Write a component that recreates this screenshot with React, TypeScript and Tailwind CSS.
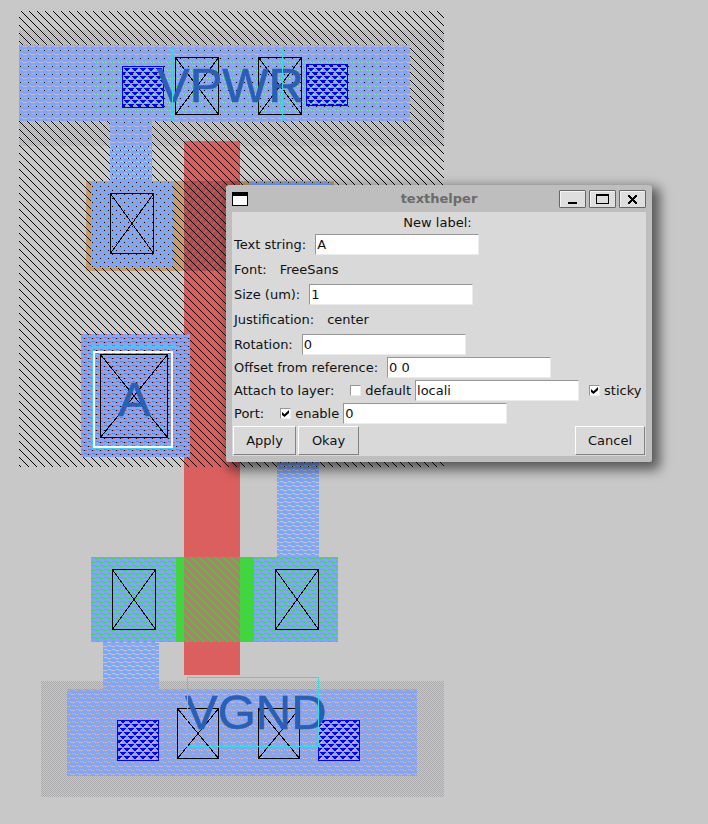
import type { ReactNode } from "react";

/* ---------- layout canvas ---------- */

type PatternProps = { id: string; rows: string[]; colors: Record<string, string> };

// A stipple tile: every character is one pixel, "." leaves the pixel clear.
function Stipple({ id, rows, colors }: PatternProps) {
  return (
    <pattern id={id} width={rows[0].length} height={rows.length} patternUnits="userSpaceOnUse">
      {rows.flatMap((row, y) =>
        row.split("").map((c, x) =>
          c === "." ? null : <rect key={`${x}-${y}`} x={x} y={y} width={1} height={1} fill={colors[c]} />,
        ),
      )}
    </pattern>
  );
}

const diagonalDown = (offset: number) =>
  Array.from({ length: 8 }, (_, y) =>
    Array.from({ length: 8 }, (_, x) => ((x - y - offset + 16) % 8 === 0 ? "k" : ".")).join(""),
  );

const diagonalUp = Array.from({ length: 8 }, (_, y) =>
  Array.from({ length: 8 }, (_, x) => ((x + y) % 8 === 4 ? "k" : ".")).join(""),
);

const metalRows = [
  "bbbbbbbb",
  "...bbbbb",
  "bbb....b",
  "bbbbbbbb",
  "bbbbbbbb",
  "bbbb...b",
  "...bbbb.",
  "bbbbbbbb",
];

const railRows = [
  "bbbbbbbb",
  "p.pbbbbb",
  "bbbp.p.b",
  "bbbbbbbb",
  "bbbbbbbb",
  "bbbbp.pb",
  "p.pbbbb.",
  "bbbbbbbb",
];

const tapRows = [
  "........",
  "........",
  "...t.t..",
  "........",
  "........",
  "........",
  "t.......",
  "........",
];

const contactRows = [
  "kkkkkk..",
  ".kkkk...",
  "..kk....",
  "........",
  "kk..kkkk",
  "k....kkk",
  "......kk",
  "........",
];

type Box = { x: number; y: number; w: number; h: number };

function Fill({ x, y, w, h, fill }: Box & { fill: string }) {
  return <rect x={x} y={y} width={w} height={h} fill={fill} />;
}

function Outline({ x, y, w, h, color }: Box & { color: string }) {
  return <path d={`M${x + 0.5} ${y + 0.5}h${w - 1}v${h - 1}h${1 - w}z`} fill="none" stroke={color} />;
}

function Cut({ x, y, w, h }: Box) {
  return (
    <g>
      <Outline x={x} y={y} w={w} h={h} color="#000" />
      <path d={`M${x} ${y}l${w} ${h}M${x + w} ${y}l${-w} ${h}`} stroke="#000" fill="none" />
    </g>
  );
}

function Via({ x, y, w, h }: Box) {
  return (
    <g>
      <Fill x={x} y={y} w={w} h={h} fill="url(#via)" />
      <Outline x={x} y={y} w={w} h={h} color="#0000ff" />
    </g>
  );
}

function CellLayout() {
  return (
    <svg width="708" height="824" viewBox="0 0 708 824" shapeRendering="crispEdges" className="block" role="img" aria-label="Cell layout">
      <defs>
        <Stipple id="well" rows={diagonalDown(2)} colors={{ k: "#000" }} />
        <Stipple id="ngate" rows={diagonalDown(2)} colors={{ k: "#41d641" }} />
        <Stipple id="pgate" rows={diagonalUp} colors={{ k: "#b8705c" }} />
        <Stipple id="implant" rows={["i.", ".i"]} colors={{ i: "#aaa9ab" }} />
        <Stipple id="metal" rows={metalRows} colors={{ b: "#7ea6fb" }} />
        <Stipple id="rail" rows={railRows} colors={{ b: "#84a4f6", p: "#c4b4c4" }} />
        <Stipple id="ntap" rows={tapRows} colors={{ t: "#41d641" }} />
        <Stipple id="ptap" rows={tapRows} colors={{ t: "#d29a80" }} />
        <Stipple id="via" rows={contactRows} colors={{ k: "#0000ff" }} />
      </defs>

      {/* poly and diffusion */}
      <Fill x={86} y={181} w={248} h={90} fill="#c69c6d" />
      <Fill x={184} y={141} w={56} h={534} fill="#dc5f5f" />
      <Fill x={184} y={181} w={56} h={90} fill="#b84856" />
      <Fill x={184} y={181} w={56} h={90} fill="url(#pgate)" />
      <Fill x={81} y={334} w={109} h={123} fill="#dc5f5f" />
      <Fill x={91} y={557} w={247} h={85} fill="#41d641" />
      <Fill x={184} y={557} w={56} h={85} fill="#aa8468" />
      <Fill x={184} y={557} w={56} h={85} fill="url(#ngate)" />

      {/* implants and well */}
      <Fill x={19} y={30} w={425} h={111} fill="url(#implant)" />
      <Fill x={19} y={141} w={165} h={5} fill="url(#implant)" />
      <Fill x={240} y={141} w={204} h={5} fill="url(#implant)" />
      <Fill x={41} y={681} w={403} h={116} fill="url(#implant)" />
      <Fill x={19} y={11} w={425} h={456} fill="url(#well)" />

      {/* local interconnect */}
      <Fill x={19} y={45} w={391} h={76} fill="url(#rail)" />
      <Fill x={110} y={121} w={42} h={25} fill="url(#rail)" />
      <Fill x={110} y={146} w={42} h={35} fill="url(#metal)" />
      <Fill x={91} y={181} w={82} h={87} fill="url(#metal)" />
      <Fill x={249} y={181} w={82} h={87} fill="url(#metal)" />
      <Fill x={81} y={334} w={109} h={123} fill="url(#metal)" />
      <Fill x={277} y={268} w={42} h={289} fill="url(#metal)" />
      <Fill x={91} y={557} w={85} h={85} fill="url(#metal)" />
      <Fill x={254} y={557} w={84} h={85} fill="url(#metal)" />
      <Fill x={103} y={642} w={56} h={39} fill="url(#metal)" />
      <Fill x={103} y={681} w={56} h={8} fill="url(#rail)" />
      <Fill x={67} y={689} w={350} h={87} fill="url(#rail)" />
      <Fill x={95} y={55} w={286} h={58} fill="url(#ntap)" />
      <Fill x={96} y={705} w={284} h={57} fill="url(#ptap)" />

      {/* contacts */}
      <Via x={122} y={66} w={42} h={42} />
      <Via x={306} y={64} w={42} h={42} />
      <Via x={117} y={720} w={42} h={41} />
      <Via x={318} y={720} w={42} h={41} />
      <Cut x={175} y={57} w={44} h={58} />
      <Cut x={258} y={57} w={44} h={58} />
      <Cut x={110} y={193} w={44} h={61} />
      <Cut x={100} y={354} w={68} h={84} />
      <Cut x={112} y={569} w={44} h={61} />
      <Cut x={275} y={569} w={44} h={61} />
      <Cut x={177} y={708} w={42} h={51} />
      <Cut x={258} y={708} w={42} h={51} />

      {/* labels and the cursor box */}
      <g fill="#2b5fb5" stroke="#2b5fb5" strokeWidth="0.6" fontFamily="'Liberation Sans', Arial, sans-serif" fontSize="49">
        <text x="157" y="102">VPWR</text>
        <text x="185" y="729">VGND</text>
        <text x="118" y="416">A</text>
      </g>
      <Outline x={172} y={47} w={111} h={75} color="#33dddd" />
      <Outline x={187} y={677} w={132} h={70} color="#33dddd" />
      <Outline x={92} y={346} w={84} h={103} color="#4cc8e8" />
      <rect x="94" y="352" width="78" height="95" fill="none" stroke="#fff" strokeWidth="2" />
    </svg>
  );
}

/* ---------- dialog ---------- */

function WindowButton({ label, children }: { label: string; children: ReactNode }) {
  return (
    <button type="button" aria-label={label} className="flex h-[18px] w-[27px] items-center justify-center rounded-[1px] border border-[#666] bg-[#dedede] shadow-[inset_1px_1px_0_#f4f4f4]">
      <svg width="15" height="12" viewBox="0 0 15 12" shapeRendering="crispEdges" aria-hidden="true">{children}</svg>
    </button>
  );
}

function Entry({ id, value }: { id: string; value: string }) {
  return (
    <input
      id={id}
      defaultValue={value}
      className="h-[21px] w-[164px] border border-t-[#969696] border-r-[#ececec] border-b-[#ececec] border-l-[#969696] bg-white px-px outline-none"
    />
  );
}

function Field({ id, label, value }: { id: string; label: string; value: string }) {
  return (
    <div className="flex h-[23px] items-center gap-[9px]">
      <label htmlFor={id}>{label}</label>
      <Entry id={id} value={value} />
    </div>
  );
}

function Check({ label, checked = false }: { label: string; checked?: boolean }) {
  return (
    <label className="flex items-center gap-1">
      <span className="grid">
        <input
          type="checkbox"
          defaultChecked={checked}
          className="peer col-start-1 row-start-1 size-[11px] appearance-none border border-t-[#969696] border-r-[#ececec] border-b-[#ececec] border-l-[#969696] bg-white"
        />
        <svg viewBox="0 0 11 11" className="pointer-events-none invisible col-start-1 row-start-1 size-[11px] peer-checked:visible" aria-hidden="true">
          <path d="M2 4l2.5 2.2L9 2v3L4.500 9L2 7z" fill="#000" />
        </svg>
      </span>
      {label}
    </label>
  );
}

function PushButton({ children, width }: { children: string; width: string }) {
  return (
    <button type="button" className={`h-[29px] border border-t-white border-r-[#828282] border-b-[#828282] border-l-white bg-[#d9d9d9] ${width}`}>
      {children}
    </button>
  );
}

function TextHelper() {
  return (
    <section
      aria-label="texthelper"
      className="absolute top-[185px] left-[226px] w-[426px] rounded-t-[3px] rounded-b-[2px] bg-[#bebebe] px-1.5 pb-1.5 text-[13px] leading-4 text-[#111] shadow-[5px_5px_12px_3px_rgba(0,0,0,0.55)]"
    >
      <header className="grid h-[27px] grid-cols-[1fr_auto_1fr] items-center">
        <svg width="16" height="14" viewBox="0 0 16 14" shapeRendering="crispEdges" aria-hidden="true">
          <path d="M0 0h16v14H0z" fill="#000" />
          <path d="M1 4h14v9H1z" fill="#fff" />
        </svg>
        <h1 className="font-bold text-[#6b6b6b]">texthelper</h1>
        <div className="flex justify-end gap-[3px]">
          <WindowButton label="Minimize">
            <path d="M3 9h9v2H3z" fill="#000" />
          </WindowButton>
          <WindowButton label="Maximize">
            <path d="M1 1h13v10H1zM2 3v7h11V3z" fill="#000" fillRule="evenodd" />
          </WindowButton>
          <WindowButton label="Close">
            <path d="M3 2h2v1h1v1h1v1h1V4h1V3h1V2h2v2h-1v1h-1v1H9v1h1v1h1v1h1v2h-2v-1H9V9H8V8H7v1H6v1H5v1H3V9h1V8h1V7h1V6H5V5H4V4H3z" fill="#000" />
          </WindowButton>
        </div>
      </header>
      <form className="bg-[#d9d9d9] px-px pb-px" onSubmit={(e) => e.preventDefault()}>
        <div className="flex flex-col pl-px">
          <h2 className="flex h-[21px] items-center justify-center pr-1">New label:</h2>
          <Field id="text-string" label="Text string:" value="A" />
          <p className="flex h-[27px] items-center gap-[13px]"><span>Font:</span><span>FreeSans</span></p>
          <Field id="size" label="Size (um):" value="1" />
          <p className="flex h-[27px] items-center gap-[13px]"><span>Justification:</span><span>center</span></p>
          <Field id="rotation" label="Rotation:" value="0" />
          <Field id="offset" label="Offset from reference:" value="0 0" />
          <div className="flex h-[23px] items-center">
            <label htmlFor="layer" className="mr-4">Attach to layer:</label>
            <Check label="default" />
            <div className="mr-2.5 ml-1 flex"><Entry id="layer" value="locali" /></div>
            <Check label="sticky" checked />
          </div>
          <div className="flex h-[23px] items-center">
            <label htmlFor="port" className="mr-4">Port:</label>
            <Check label="enable" checked />
            <div className="ml-1 flex"><Entry id="port" value="0" /></div>
          </div>
        </div>
        <div className="mt-px flex gap-0.5">
          <PushButton width="w-[63px]">Apply</PushButton>
          <PushButton width="w-[61px]">Okay</PushButton>
          <PushButton width="ml-auto w-[70px]">Cancel</PushButton>
        </div>
      </form>
    </section>
  );
}

export default function App() {
  return (
    <main className="relative min-h-screen overflow-hidden bg-[#c8c8c8] font-['DejaVu_Sans',sans-serif]">
      <CellLayout />
      <TextHelper />
    </main>
  );
}
